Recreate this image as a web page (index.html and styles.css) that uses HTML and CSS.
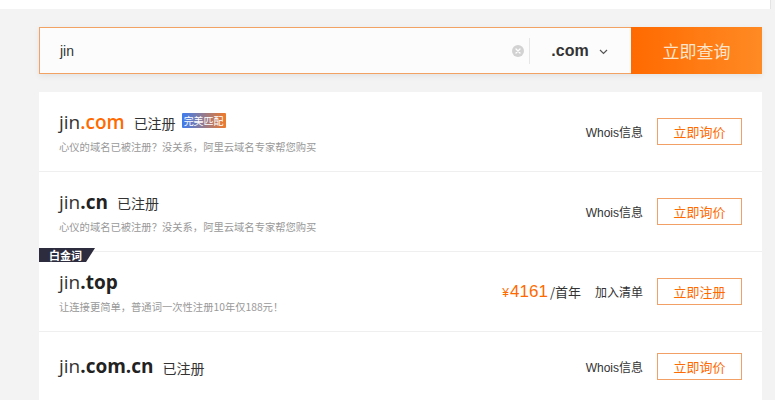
FILE: index.html
```html
<!DOCTYPE html>
<html lang="zh-CN">
<head>
<meta charset="utf-8">
<link rel="stylesheet" href="styles.css">
</head>
<body>
<div class="topbar"></div>
<main class="wrap">
  <div class="search">
    <div class="input">jin</div>
    <span class="clear"><svg width="12" height="12" viewBox="0 0 12 12"><circle cx="6" cy="6" r="6" fill="#d2d2d2"/><path d="M4 4L8 8M8 4L4 8" stroke="#fff" stroke-width="1.3" stroke-linecap="round"/></svg></span>
    <span class="divider"></span>
    <div class="suffix">.com <svg class="chev" width="9" height="6" viewBox="0 0 9 6"><path d="M1 1L4.5 4.5L8 1" fill="none" stroke="#555" stroke-width="1.2"/></svg></div>
    <button class="go">立即查询</button>
  </div>

  <section class="list">
    <div class="row">
      <div class="info">
        <div class="title"><span class="name">jin<b class="sfx orange">.com</b></span><span class="status">已注册</span><span class="badge">完美匹配</span></div>
        <div class="desc">心仪的域名已被注册？没关系，阿里云域名专家帮您购买</div>
      </div>
      <div class="actions"><span class="link">Whois信息</span><button class="btn">立即询价</button></div>
    </div>
    <div class="row">
      <div class="info">
        <div class="title"><span class="name">jin<b class="sfx">.cn</b></span><span class="status">已注册</span></div>
        <div class="desc">心仪的域名已被注册？没关系，阿里云域名专家帮您购买</div>
      </div>
      <div class="actions"><span class="link">Whois信息</span><button class="btn">立即询价</button></div>
    </div>
    <div class="row premium">
      <span class="tag">白金词</span>
      <div class="info">
        <div class="title"><span class="name">jin<b class="sfx">.top</b></span></div>
        <div class="desc">让连接更简单，普通词一次性注册10年仅188元！</div>
      </div>
      <div class="actions"><span class="price"><span class="num"><small>¥</small>4161</span>/首年</span><span class="link">加入清单</span><button class="btn">立即注册</button></div>
    </div>
    <div class="row last">
      <div class="info">
        <div class="title"><span class="name">jin<b class="sfx">.com.cn</b></span><span class="status">已注册</span></div>
      </div>
      <div class="actions"><span class="link">Whois信息</span><button class="btn">立即询价</button></div>
    </div>
  </section>
</main>
</body>
</html>
```

FILE: styles.css
```css
* { box-sizing: border-box; }
html, body { margin: 0; padding: 0; }
body {
  background: #f3f3f3;
  font-family: "Noto Sans CJK SC", "Liberation Sans", sans-serif;
  color: #333;
  width: 775px;
  height: 400px;
  overflow: hidden;
}
.topbar {
  height: 9px;
  width: 771px;
  background: #fff;
  border-right: 1px solid #e4e4e4;
}
.wrap {
  padding: 18px 0 0 39px;
  width: 762px;
}
.search {
  height: 47px;
  display: flex;
  align-items: center;
  border: 1px solid #f2a262;
  background: #fcfcfc;
  box-shadow: 0 2px 6px rgba(0,0,0,0.07);
}
.input {
  flex: 1;
  padding-left: 20px;
  font-family: "Liberation Sans", "Noto Sans CJK SC", sans-serif;
  font-size: 14px;
  color: #333;
}
.clear { display: flex; margin-right: 5px; }
.divider { width: 1px; height: 26px; background: #e6e6e6; }
.suffix {
  width: 101px;
  display: flex;
  align-items: center;
  justify-content: center;
  font-family: "Liberation Sans", sans-serif;
  font-weight: bold;
  font-size: 16px;
  color: #333;
  padding-right: 2px;
}
.chev { margin-left: 10px; margin-top: 2px; }
.go {
  width: 131px;
  height: 47px;
  margin: -1px -1px -1px 0;
  border: none;
  background: linear-gradient(90deg, #ff6a00, #ff8a24);
  color: #fde6cf;
  font-family: "Noto Sans CJK SC", sans-serif;
  font-size: 17px;
  padding: 0;
}
.list {
  margin-top: 18px;
  background: #fff;
}
.row {
  position: relative;
  height: 80px;
  display: flex;
  align-items: center;
  justify-content: space-between;
  padding: 0 20px;
  border-bottom: 1px solid #efefef;
}
.row.last { height: 68px; border-bottom: none; }
.info { display: flex; flex-direction: column; }
.title { display: flex; align-items: center; height: 26px; }
.name {
  font-family: "Open Sans", "Liberation Sans", sans-serif;
  font-size: 19px;
  color: #333;
}
.sfx { font-weight: 700; color: #222; }
.sfx.orange { color: #ff6a00; font-weight: 600; }
.status { font-size: 14px; margin-left: 9px; color: #333; margin-top: 3px; }
.badge {
  margin-left: 6px;
  margin-top: -2px;
  font-size: 10px;
  line-height: 15px;
  height: 15px;
  padding: 0 2px;
  color: #fff;
  background: linear-gradient(90deg, #3c7cf0, #f07a2a);
  border-radius: 1px;
}
.desc { font-size: 10.3px; color: #999; margin-top: 4px; line-height: 16px; }
.actions { display: flex; align-items: center; }
.link { font-size: 12px; color: #333; margin-right: 14px; font-family: "Liberation Sans", "Noto Sans CJK SC", sans-serif; }
.price { font-size: 13px; color: #333; margin-right: 14px; }
.price .num { font-family: "Liberation Sans", sans-serif; font-size: 17px; color: #ff6a00; margin-right: 2px; }
.price .num small { font-size: 12px; margin-right: 1px; }
.btn {
  width: 85px;
  height: 27px;
  border: 1px solid #f3a067;
  background: #fff;
  color: #ff6a00;
  font-family: "Noto Sans CJK SC", sans-serif;
  font-size: 13px;
  padding: 0;
}
.tag {
  position: absolute;
  left: 0;
  top: -4px;
  height: 14px;
  width: 56px;
  padding-left: 10px;
  font-size: 11px;
  font-weight: bold;
  line-height: 14px;
  color: #fff;
  background: #2c2c3e;
  clip-path: polygon(0 0, 100% 0, 84% 100%, 0 100%);
}
```
